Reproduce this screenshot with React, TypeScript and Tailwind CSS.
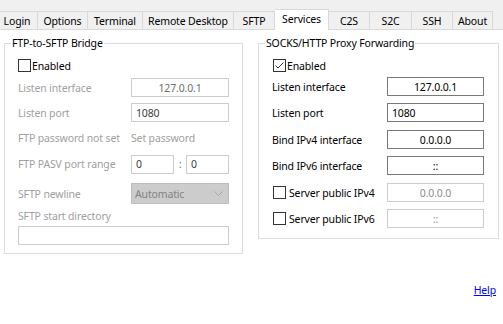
import React from 'react';

type Tab = { label: string; width: number };

const tabs: Tab[] = [
  { label: 'Login', width: 42 },
  { label: 'Options', width: 50 },
  { label: 'Terminal', width: 55 },
  { label: 'Remote Desktop', width: 91 },
  { label: 'SFTP', width: 41 },
  { label: 'Services', width: 54 },
  { label: 'C2S', width: 41 },
  { label: 'S2C', width: 42 },
  { label: 'SSH', width: 41 },
  { label: 'About', width: 40 },
];

const Checkbox = ({ checked = false }: { checked?: boolean }) => (
  <span className="w-[13px] h-[13px] border border-[#333333] bg-white flex items-center justify-center shrink-0">
    {checked && (
      <svg width="11" height="11" viewBox="0 0 11 11">
        <polyline points="1.5,5.5 4,8 9.5,2.5" fill="none" stroke="#333333" strokeWidth="1" />
      </svg>
    )}
  </span>
);

// text box, disabled ones get the pale border
const Field = ({
  value,
  width,
  center = false,
  disabled = false,
  textColor,
}: {
  value: string;
  width: number;
  center?: boolean;
  disabled?: boolean;
  textColor?: string;
}) => (
  <div
    className={`h-[19px] border flex items-center px-[4px] bg-white ${disabled ? 'border-[#cccccc]' : 'border-[#7a7a7a]'} ${center ? 'justify-center' : 'justify-start'}`}
    style={{ width, color: textColor ?? (disabled ? '#6d6d6d' : '#000000') }}
  >
    {value}
  </div>
);

const GroupBox = ({
  title,
  className,
  children,
}: {
  title: string;
  className: string;
  children: React.ReactNode;
}) => (
  <div className={`relative border border-[#dcdcdc] pl-[13px] ${className}`}>
    <span className="absolute left-[6px] top-[-8px] bg-white px-[1px] leading-[14px] text-black">{title}</span>
    {children}
  </div>
);

export default function App() {
  return (
    <div
      className="w-[503px] h-[324px] bg-white overflow-hidden text-[10.5px] tracking-[-0.15px] leading-[14px] text-black"
      style={{ fontFamily: '"Noto Sans", sans-serif' }}
    >
      {/* tab strip */}
      <div className="h-[30px] bg-[#f0f0f0] flex items-end ml-[-4px]">
        {tabs.map((t, i) => {
          const active = t.label === 'Services';
          return (
            <div
              key={t.label}
              className={`shrink-0 flex items-center justify-center border-t border-r border-[#d9d9d9] ${i === 0 ? 'border-l' : ''} ${active ? 'h-[21px] bg-white pb-[3px]' : 'h-[19px] border-b bg-[#f0f0f0]'}`}
              style={{ width: t.width }}
            >
              {t.label}
            </div>
          );
        })}
        <div className="flex-1 border-b border-[#d9d9d9]" />
      </div>

      <div className="flex items-start gap-[15px] pl-[4px] mt-[13px]">
        <GroupBox title="FTP-to-SFTP Bridge" className="w-[239px] h-[211px]">
          <div className="flex items-center gap-[1px] h-[19px] mt-[12px]">
            <Checkbox />
            <span>Enabled</span>
          </div>
          <div className="flex items-center h-[19px] mt-[3px]">
            <span className="w-[113px] text-[#a0a0a0]">Listen interface</span>
            <Field value="127.0.0.1" width={98} center disabled />
          </div>
          <div className="flex items-center h-[19px] mt-[6px]">
            <span className="w-[113px] text-[#a0a0a0]">Listen port</span>
            <Field value="1080" width={98} disabled textColor="#3c3c3c" />
          </div>
          <div className="flex items-center h-[19px] mt-[6px]">
            <span className="w-[113px] text-[#a0a0a0]">FTP password not set</span>
            <span className="text-[#a0a0a0]">Set password</span>
          </div>
          <div className="flex items-center h-[20px] mt-[7px]">
            <span className="w-[113px] text-[#a0a0a0]">FTP PASV port range</span>
            <Field value="0" width={43} disabled textColor="#3c3c3c" />
            <span className="w-[12px] text-center text-[#6d6d6d]">:</span>
            <Field value="0" width={43} disabled textColor="#3c3c3c" />
          </div>
          <div className="flex items-center h-[21px] mt-[9px]">
            <span className="w-[113px] text-[#a0a0a0]">SFTP newline</span>
            <div className="w-[98px] h-[21px] bg-[#cccccc] border border-[#bfbfbf] flex items-center justify-between pl-[3px] pr-[5px] text-[#838383]">
              <span>Automatic</span>
              <svg width="9" height="5" viewBox="0 0 9 5">
                <polyline points="0.5,0.5 4.5,4.5 8.5,0.5" fill="none" stroke="#a8a8a8" strokeWidth="1" />
              </svg>
            </div>
          </div>
          <div className="flex items-center h-[18px] mt-[3px] text-[#a0a0a0]">SFTP start directory</div>
          <div className="w-[211px] h-[19px] mt-[1px] border border-[#cccccc]" />
        </GroupBox>

        <GroupBox title="SOCKS/HTTP Proxy Forwarding" className="w-[241px] h-[196px]">
          <div className="flex items-center gap-[1px] h-[19px] mt-[12px] pl-[1px]">
            <Checkbox checked />
            <span>Enabled</span>
          </div>
          <div className="flex items-center h-[19px] mt-[2px]">
            <span className="w-[115px]">Listen interface</span>
            <Field value="127.0.0.1" width={97} center />
          </div>
          <div className="flex items-center h-[19px] mt-[7px]">
            <span className="w-[115px]">Listen port</span>
            <Field value="1080" width={97} />
          </div>
          <div className="flex items-center h-[19px] mt-[8px]">
            <span className="w-[115px]">Bind IPv4 interface</span>
            <Field value="0.0.0.0" width={97} center />
          </div>
          <div className="flex items-center h-[19px] mt-[7px]">
            <span className="w-[115px]">Bind IPv6 interface</span>
            <Field value="::" width={97} center />
          </div>
          <div className="flex items-center h-[19px] mt-[8px]">
            <span className="w-[115px] flex items-center gap-[3px] pl-[1px]">
              <Checkbox />
              Server public IPv4
            </span>
            <Field value="0.0.0.0" width={97} center disabled textColor="#8d8d8d" />
          </div>
          <div className="flex items-center h-[19px] mt-[7px]">
            <span className="w-[115px] flex items-center gap-[3px] pl-[1px]">
              <Checkbox />
              Server public IPv6
            </span>
            <Field value="::" width={97} center disabled textColor="#8d8d8d" />
          </div>
        </GroupBox>
      </div>

      <div className="flex justify-end pr-[7px] mt-[29px]">
        <a href="#" className="text-[#0000ff] underline">Help</a>
      </div>
    </div>
  );
}
